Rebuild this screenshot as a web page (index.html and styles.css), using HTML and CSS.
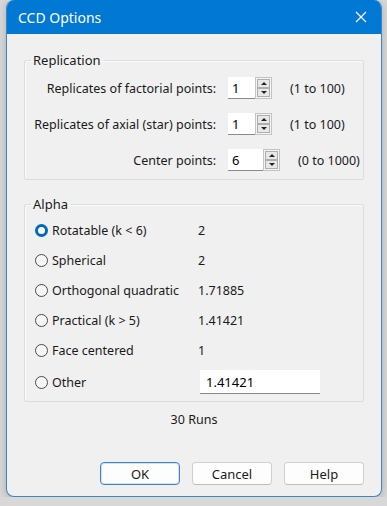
FILE: index.html
```html
<!DOCTYPE html>
<html lang="en">
<head>
    <meta charset="UTF-8">
    <meta name="viewport" content="width=device-width, initial-scale=1.0">
    <title>CCD Options</title>
    <link rel="stylesheet" href="styles.css">
</head>
<body>
    <div class="window">
        <div class="titlebar">
            <span class="title">CCD Options</span>
            <svg class="close" width="12" height="12" viewBox="0 0 12 12">
                <path d="M1 1 L11 11 M11 1 L1 11" stroke="#fff" stroke-width="1.2" fill="none"/>
            </svg>
        </div>
        <div class="content">
            <fieldset class="group replication">
                <legend>Replication</legend>
                <div class="rep-row">
                    <label class="rep-label">Replicates of factorial points:</label>
                    <div class="spin">
                        <input type="text" class="spin-input" value="1">
                        <div class="spin-btns">
                            <span class="spin-btn"><span class="arrow-up"></span></span>
                            <span class="spin-btn"><span class="arrow-down"></span></span>
                        </div>
                    </div>
                    <span class="range">(1 to 100)</span>
                </div>
                <div class="rep-row">
                    <label class="rep-label">Replicates of axial (star) points:</label>
                    <div class="spin">
                        <input type="text" class="spin-input" value="1">
                        <div class="spin-btns">
                            <span class="spin-btn"><span class="arrow-up"></span></span>
                            <span class="spin-btn"><span class="arrow-down"></span></span>
                        </div>
                    </div>
                    <span class="range">(1 to 100)</span>
                </div>
                <div class="rep-row">
                    <label class="rep-label">Center points:</label>
                    <div class="spin">
                        <input type="text" class="spin-input wide" value="6">
                        <div class="spin-btns">
                            <span class="spin-btn"><span class="arrow-up"></span></span>
                            <span class="spin-btn"><span class="arrow-down"></span></span>
                        </div>
                    </div>
                    <span class="range">(0 to 1000)</span>
                </div>
            </fieldset>

            <fieldset class="group alpha">
                <legend>Alpha</legend>
                <div class="radio-row">
                    <span class="radio checked"></span>
                    <span class="radio-label">Rotatable (k &lt; 6)</span>
                    <span class="value">2</span>
                </div>
                <div class="radio-row">
                    <span class="radio"></span>
                    <span class="radio-label">Spherical</span>
                    <span class="value">2</span>
                </div>
                <div class="radio-row">
                    <span class="radio"></span>
                    <span class="radio-label">Orthogonal quadratic</span>
                    <span class="value">1.71885</span>
                </div>
                <div class="radio-row">
                    <span class="radio"></span>
                    <span class="radio-label">Practical (k &gt; 5)</span>
                    <span class="value">1.41421</span>
                </div>
                <div class="radio-row">
                    <span class="radio"></span>
                    <span class="radio-label">Face centered</span>
                    <span class="value">1</span>
                </div>
                <div class="radio-row other">
                    <span class="radio"></span>
                    <span class="radio-label">Other</span>
                    <input type="text" class="other-input" value="1.41421">
                </div>
            </fieldset>

            <div class="runs">30 Runs</div>

            <div class="buttons">
                <button type="button" class="btn default">OK</button>
                <button type="button" class="btn">Cancel</button>
                <button type="button" class="btn">Help</button>
            </div>
        </div>
    </div>
</body>
</html>
```

FILE: styles.css
```css
body {
    font-family: "Noto Sans", "Open Sans", sans-serif;
    font-size: 12.5px;
    color: #1a1a1a;
    background-color: #d8d8d8;
    margin: 0;
    padding: 0;
}

.window {
    margin-left: 6px;
    width: 374px;
    height: 496px;
    background-color: #f0f0f0;
    border: 1px solid #3a86cc;
    border-top: none;
    border-radius: 8px;
    box-shadow: 0 2px 8px rgba(0, 0, 0, 0.2);
    overflow: hidden;
}

.titlebar {
    height: 34px;
    background-color: #0078d4;
    display: flex;
    align-items: center;
    justify-content: space-between;
    padding: 0 14px 0 11px;
}

.title {
    color: white;
    font-size: 14px;
}

.content {
    padding: 17px 17px 0 17px;
}

.group {
    border: 1px solid #dcdcdc;
    border-radius: 2px;
    margin: 0;
    padding: 0;
    box-shadow: inset 1px 1px 0 #fafafa;
}

.group legend {
    padding: 0 3px 0 2px;
    margin-left: 6px;
    font-size: 13px;
}

.replication {
    padding: 1px 0 6px 0;
    height: 120px;
}

.rep-row {
    display: flex;
    align-items: center;
    height: 36px;
}

.rep-label {
    width: 191px;
    text-align: right;
}

.spin {
    display: flex;
    margin-left: 12px;
    margin-right: 18px;
}

.spin-input {
    width: 27px;
    height: 22px;
    box-sizing: border-box;
    border: none;
    border-bottom: 1px solid #8a8a8a;
    padding: 0 4px;
    font-family: inherit;
    font-size: 13px;
    background: white;
    outline: none;
}

.spin-input.wide {
    width: 35px;
}

.spin-btns {
    display: flex;
    flex-direction: column;
    border: 1px solid #c4c4c4;
    background: #f4f4f4;
    padding: 1px;
    width: 17px;
    height: 22px;
    box-sizing: border-box;
}

.spin-btn {
    flex: 1;
    display: flex;
    align-items: center;
    justify-content: center;
    border: 1px solid #adadad;
    background: #e8e8e8;
}

.arrow-up {
    width: 0;
    height: 0;
    border-left: 3px solid transparent;
    border-right: 3px solid transparent;
    border-bottom: 3px solid #222;
}

.arrow-down {
    width: 0;
    height: 0;
    border-left: 3px solid transparent;
    border-right: 3px solid transparent;
    border-top: 3px solid #222;
}

.alpha {
    margin-top: 15px;
    padding: 2px 0 6px 0;
    height: 197px;
}

.radio-row {
    display: flex;
    align-items: center;
    height: 30px;
    padding-left: 10px;
}

.radio-row.other {
    height: 34px;
}

.radio {
    width: 13px;
    height: 13px;
    box-sizing: border-box;
    border: 1px solid #4a4a4a;
    border-radius: 50%;
    background: #f6f6f6;
    margin-right: 4px;
}

.radio.checked {
    border: 3.5px solid #0067c0;
    background: white;
}

.radio-label {
    width: 146px;
}

.other-input {
    width: 120px;
    height: 24px;
    box-sizing: border-box;
    border: none;
    border-bottom: 1px solid #8a8a8a;
    padding: 0 6px;
    margin-left: 2px;
    font-family: inherit;
    font-size: 13px;
    background: white;
    outline: none;
}

.runs {
    text-align: center;
    margin-top: 9px;
}

.buttons {
    display: flex;
    justify-content: flex-end;
    gap: 12px;
    margin-top: 34px;
}

.btn {
    width: 80px;
    height: 23px;
    background: #fdfdfd;
    border: 1px solid #d0d0d0;
    border-bottom-color: #bdbdbd;
    border-radius: 4px;
    font-family: inherit;
    font-size: 13px;
    color: #1a1a1a;
    padding: 0;
}

.btn.default {
    border: 1px solid #3a86cc;
    box-shadow: inset 0 0 0 1px #cfe3f5;
}
```
